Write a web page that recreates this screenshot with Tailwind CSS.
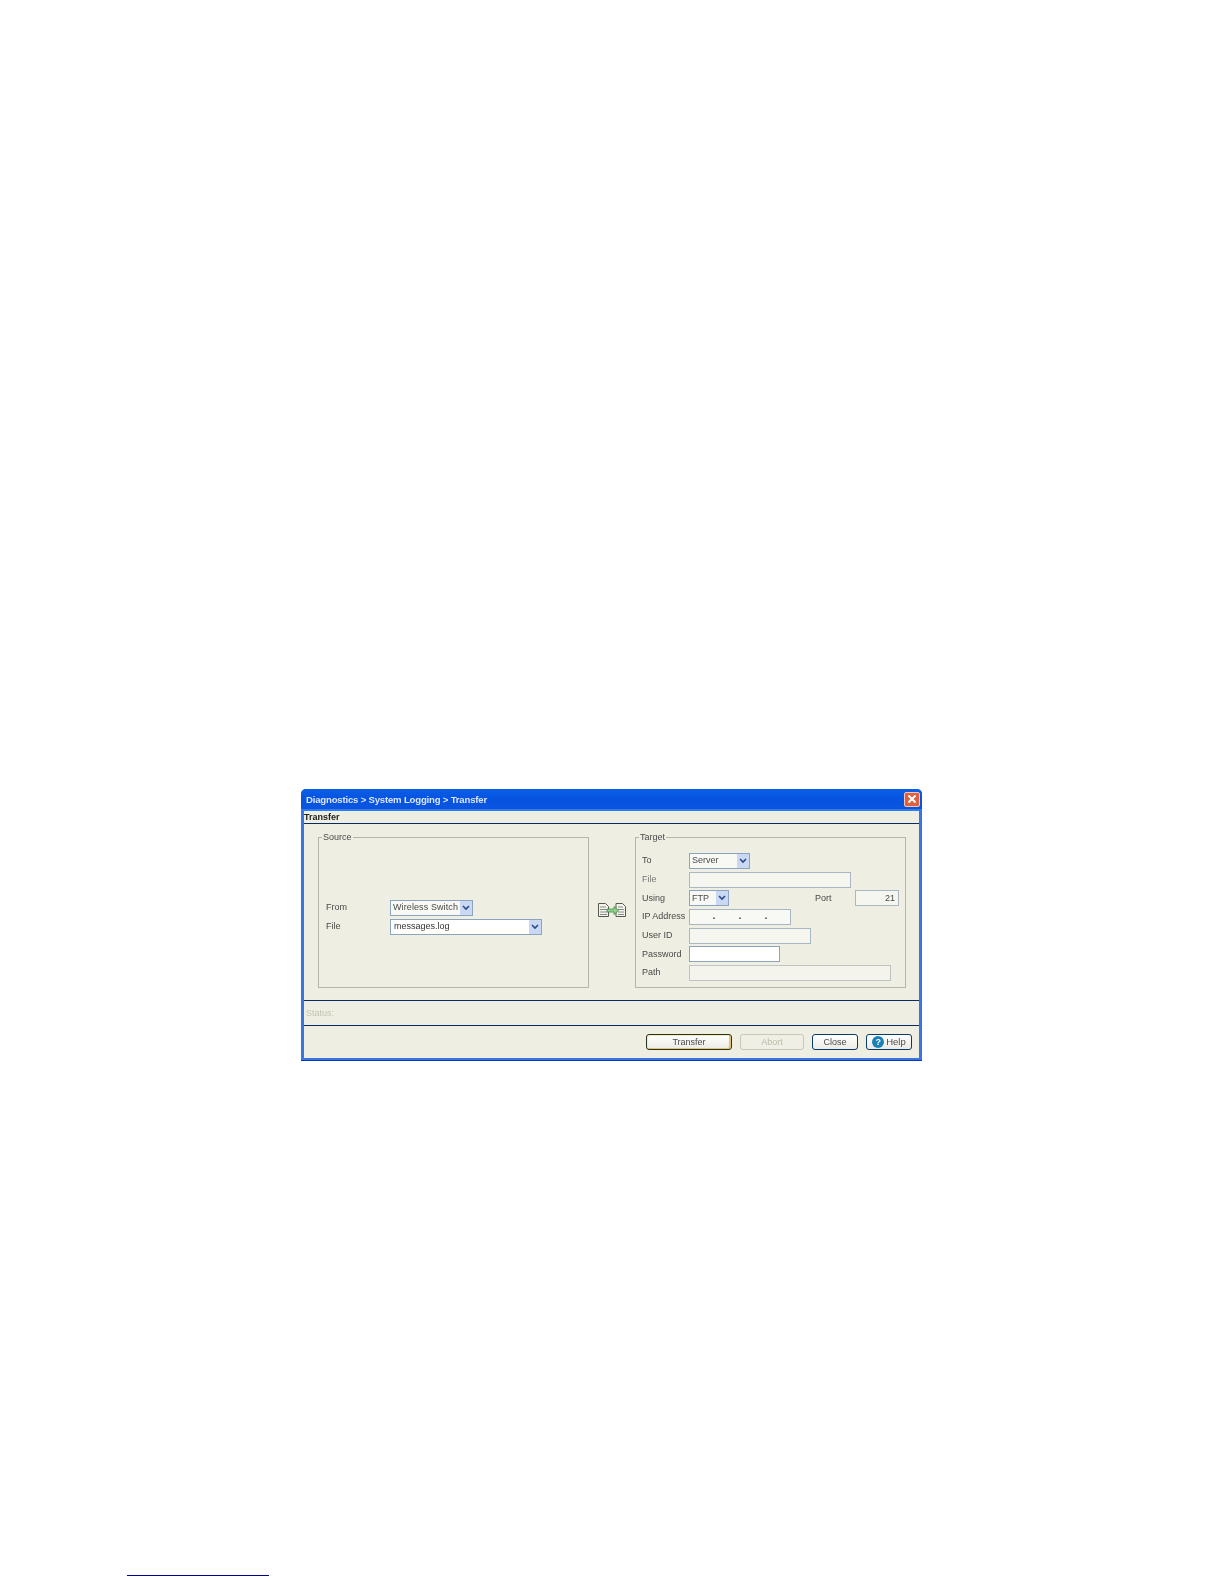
<!DOCTYPE html>
<html lang="en">
<head>
    <meta charset="UTF-8">
    <title>Diagnostics - System Logging - Transfer</title>
    <script src="https://cdn.jsdelivr.net/npm/@tailwindcss/browser@4"></script>
</head>
<body class="bg-white font-['Liberation_Sans',sans-serif] text-[9px] text-[#4a4a4a]">
    <div class="h-[1584px] overflow-hidden pt-[789px]">
        <!-- dialog -->
        <div class="ml-[301px] w-[621px] h-[272px] flex flex-col rounded-t-[5px] bg-[#3b74e6] px-[3px] pb-[3px] shadow-[inset_0_-1px_0_#0a3cb0] blur-[0.35px]">
            <div class="h-[22px] shrink-0 flex items-center justify-between -mx-[3px] pl-[5px] pr-[2px] rounded-t-[5px] bg-gradient-to-b from-[#0a5fe8] via-[#0653e0] to-[#0a55e0] border-b-2 border-[#2f7bf0]">
                <span class="pt-[3px] text-[9.6px] text-[#dbe4f8] font-bold tracking-[-0.2px]">Diagnostics &gt; System Logging &gt; Transfer</span>
                <div class="w-[16px] h-[15px] rounded-[2px] bg-[#dd6040] border border-[#f0c8b8] flex items-center justify-center">
                    <svg width="10" height="10" viewBox="0 0 10 10"><path d="M1.500 1.500l7 7M8.500 1.500l-7 7" stroke="#fff" stroke-width="2"/></svg>
                </div>
            </div>
            <div class="flex-1 flex flex-col bg-[#eeeee2]">
                <div class="h-[13px] shrink-0 border-b border-[#0a2a60] leading-[13px] text-[9px] font-bold text-[#222]">Transfer</div>

                <div class="h-[177px] shrink-0 flex items-start pl-[14px] pt-[6px] border-b border-[#0a2a60]">
                    <fieldset class="w-[271px] h-[158px] border border-[#b4b6a6] flex flex-col justify-end pl-[7px] pb-[52px]">
                        <legend class="-ml-[4px] px-[1px] h-[14px] leading-[15px]">Source</legend>
                        <div class="flex flex-col gap-[3px]">
                            <div class="flex items-center h-[16px]">
                                <span class="w-[64px]">From</span>
                                <div class="w-[83px] h-[16px] flex items-center justify-between border border-[#8aa5bd] bg-[#f8f8f4] pl-[2px]">
                                    <span class="whitespace-nowrap tracking-[0.1px]">Wireless Switch</span>
                                    <div class="w-[12px] h-full flex items-center justify-center bg-[#cbd8f3]">
                                        <svg width="8" height="6" viewBox="0 0 8 6"><path d="M1 1l3 3 3-3" fill="none" stroke="#2a4a8a" stroke-width="1.600"/></svg>
                                    </div>
                                </div>
                            </div>
                            <div class="flex items-center h-[16px]">
                                <span class="w-[64px]">File</span>
                                <div class="w-[152px] h-[16px] flex items-center justify-between border border-[#8aa5bd] bg-white pl-[3px]">
                                    <span class="text-[#333]">messages.log</span>
                                    <div class="w-[12px] h-full flex items-center justify-center bg-[#cbd8f3]">
                                        <svg width="8" height="6" viewBox="0 0 8 6"><path d="M1 1l3 3 3-3" fill="none" stroke="#2a4a8a" stroke-width="1.600"/></svg>
                                    </div>
                                </div>
                            </div>
                        </div>
                    </fieldset>

                    <div class="w-[46px] h-[158px] flex items-center justify-center pt-[3px]">
                        <svg width="28" height="15" viewBox="0 0 28 15">
                            <path d="M.5.5h7l3 3v10H.5z M18 .5h6.500l3 3v10H18z" fill="#f4f4ee" stroke="#55584f"/>
                            <path d="M2 4h6M2 6.500h7M2 9h7M2 11.500h7M20 4h5M20 6.500h6M20 9h6M20 11.500h6" stroke="#8a8c84"/>
                            <path d="M9 6h7V3.500l4.500 4-4.500 4V9H9z" fill="#8fd08a" stroke="#3f8a4a" stroke-width=".8"/>
                        </svg>
                    </div>

                    <fieldset class="w-[271px] h-[158px] border border-[#b4b6a6] pl-[6px]">
                        <legend class="-ml-[3px] px-[1px] h-[14px] leading-[15px]">Target</legend>
                        <div class="flex flex-col gap-[2.7px] pt-[9px]">
                            <div class="flex items-center h-[16px]">
                                <span class="w-[47px]">To</span>
                                <div class="w-[61px] h-[16px] flex items-center justify-between border border-[#8aa5bd] bg-[#f8f8f4] pl-[2px]">
                                    <span>Server</span>
                                    <div class="w-[12px] h-full flex items-center justify-center bg-[#cbd8f3]">
                                        <svg width="8" height="6" viewBox="0 0 8 6"><path d="M1 1l3 3 3-3" fill="none" stroke="#2a4a8a" stroke-width="1.600"/></svg>
                                    </div>
                                </div>
                            </div>
                            <div class="flex items-center h-[16px]">
                                <span class="w-[47px] text-[#777]">File</span>
                                <div class="w-[162px] h-[16px] border border-[#a9b7c2] bg-[#f6f6f0]"></div>
                            </div>
                            <div class="flex items-center h-[16px]">
                                <span class="w-[47px]">Using</span>
                                <div class="w-[40px] h-[16px] flex items-center justify-between border border-[#8aa5bd] bg-[#f8f8f4] pl-[2px]">
                                    <span>FTP</span>
                                    <div class="w-[12px] h-full flex items-center justify-center bg-[#cbd8f3]">
                                        <svg width="8" height="6" viewBox="0 0 8 6"><path d="M1 1l3 3 3-3" fill="none" stroke="#2a4a8a" stroke-width="1.600"/></svg>
                                    </div>
                                </div>
                                <span class="ml-[86px] w-[40px]">Port</span>
                                <div class="w-[44px] h-[16px] border border-[#a9b7c2] bg-[#f6f6f0] pr-[3px] text-right leading-[14px]">21</div>
                            </div>
                            <div class="flex items-center h-[16px]">
                                <span class="w-[47px] whitespace-nowrap">IP Address</span>
                                <div class="w-[102px] h-[16px] flex items-center justify-around border border-[#a9b7c2] bg-[#f8f8f4] pl-[11px] pr-[11px] font-bold text-[#222]">
                                    <span>.</span><span>.</span><span>.</span>
                                </div>
                            </div>
                            <div class="flex items-center h-[16px]">
                                <span class="w-[47px]">User ID</span>
                                <div class="w-[122px] h-[16px] border border-[#a9b7c2] bg-[#f6f6f0]"></div>
                            </div>
                            <div class="flex items-center h-[16px]">
                                <span class="w-[47px]">Password</span>
                                <div class="w-[91px] h-[16px] border border-[#8aa5bd] bg-white"></div>
                            </div>
                            <div class="flex items-center h-[16px]">
                                <span class="w-[47px]">Path</span>
                                <div class="w-[202px] h-[16px] border border-[#bcc3c0] bg-[#f4f4ec]"></div>
                            </div>
                        </div>
                    </fieldset>
                </div>

                <div class="h-[25px] shrink-0 flex items-center pl-[2px] pt-[2px] border-b border-[#0a2a60] text-[#c4c4b4]">Status:</div>

                <div class="flex-1 flex justify-end gap-[8px] pt-[8px] pr-[7px]">
                    <button class="w-[86px] h-[16px] pt-[1px] rounded-[3px] border border-[#26361e] bg-gradient-to-b from-white to-[#ecebe4] shadow-[inset_-2px_-1px_0_#e6c274,inset_1px_1px_0_#fbe8b8]">Transfer</button>
                    <button class="w-[64px] h-[16px] pt-[1px] rounded-[3px] border border-[#c9c7ba] bg-[#f0efe6] text-[#bcbaa8]">Abort</button>
                    <button class="w-[46px] h-[16px] pt-[1px] rounded-[3px] border border-[#0a3a68] bg-gradient-to-b from-white to-[#ecebe4]">Close</button>
                    <button class="w-[46px] h-[16px] rounded-[3px] border border-[#0a3a68] bg-gradient-to-b from-white to-[#ecebe4] flex items-center justify-center gap-[2px]">
                        <span class="w-[12px] h-[12px] rounded-full bg-[#1a80b8] text-white font-bold text-[9px] leading-[12px]">?</span>
                        <span class="text-[9.5px]">Help</span>
                    </button>
                </div>
            </div>
        </div>

        <!-- footnote rule -->
        <div class="ml-[127px] mt-[514px] w-[142px] h-[1px] bg-[#00009a]"></div>
    </div>
</body>
</html>
